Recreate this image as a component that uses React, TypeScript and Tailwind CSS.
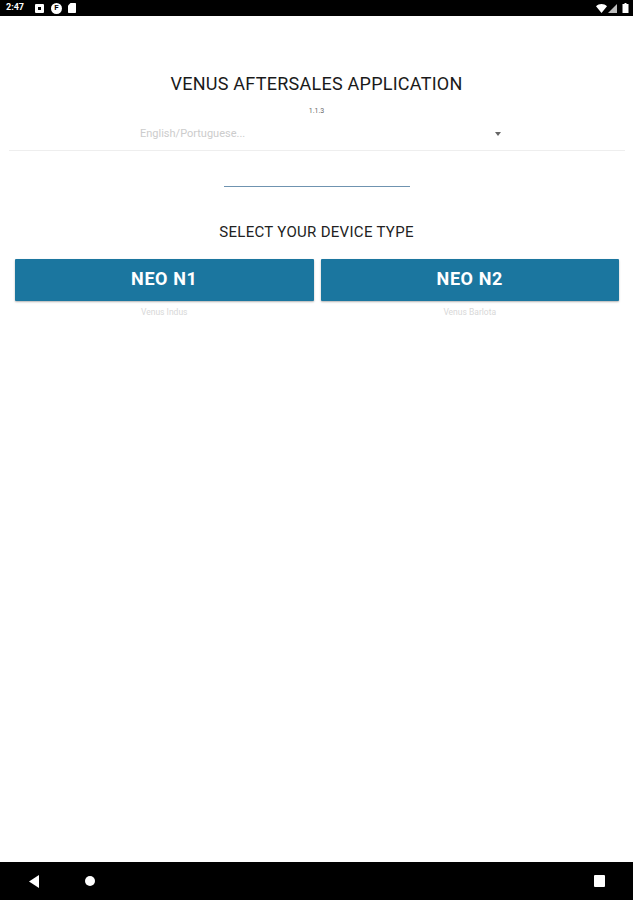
export default function App() {
  return (
    <div className="h-[900px] w-[633px] flex flex-col bg-white overflow-hidden font-['Roboto',sans-serif]">
      {/* Status bar */}
      <div className="h-4 bg-black flex items-center justify-between pl-[6px] pr-[4px] shrink-0">
        <div className="flex items-center">
          <span className="w-[20px] text-[9px] font-bold text-white">2:47</span>
          <div className="ml-[9px] w-[9px] h-[9px] bg-white rounded-[1px] flex items-center justify-center">
            <div className="w-[3px] h-[3px] bg-black"></div>
          </div>
          <div className="ml-[7px] w-[11px] h-[11px] bg-white rounded-full flex items-center justify-center">
            <span className="text-[8px] leading-none font-bold text-black">F</span>
          </div>
          <svg width="8" height="10" viewBox="0 0 8 10" className="ml-[6px]">
            <path d="M2.5 0H7C7.6 0 8 .4 8 1V9C8 9.6 7.6 10 7 10H1C.4 10 0 9.6 0 9V2.5Z" fill="#fff" />
          </svg>
        </div>
        <div className="flex items-center gap-[1px]">
          <svg width="11" height="9" viewBox="0 0 11 9">
            <path d="M0 2.2C3 -0.6 8 -0.6 11 2.2L5.5 9Z" fill="#fff" />
          </svg>
          <svg width="9" height="9" viewBox="0 0 9 9">
            <path d="M9 0V9H0Z" fill="#bdbdbd" />
          </svg>
          <svg width="7" height="10" viewBox="0 0 6 10" className="ml-[4px]">
            <path d="M2 0H4V1H6V10H0V1H2Z" fill="#fff" />
          </svg>
        </div>
      </div>

      {/* Content */}
      <div className="flex-1 flex flex-col items-center">
        <h1 className="mt-[58px] text-[18px] leading-5 tracking-[0.25px] text-[#1a1a1a]">VENUS AFTERSALES APPLICATION</h1>
        <p className="mt-[13px] text-[7px] leading-[9px] text-[#666]">1.1.3</p>

        <div className="mt-[8px] w-[616px] h-[27px] border-b border-[#eeeeee] flex justify-center">
          <div className="w-[369px] h-[20px] pl-[8px] flex items-center justify-between">
            <span className="text-[11px] text-[#cccccc]">English/Portuguese...</span>
            <svg width="6" height="4" viewBox="0 0 6 4">
              <path d="M0 0H6L3 4Z" fill="#666" />
            </svg>
          </div>
        </div>

        <div className="mt-[35px] w-[186px] h-[1px] bg-[#6f93b0]"></div>

        <h2 className="mt-[35px] text-[15px] leading-5 tracking-[0.3px] text-[#222]">SELECT YOUR DEVICE TYPE</h2>

        <div className="mt-[17px] w-full pl-[15px] pr-[14px] grid grid-cols-2 gap-[7px]">
          <div className="flex flex-col items-center">
            <button className="w-full h-[42px] pb-[3px] bg-[#1b769f] rounded-[1px] shadow-[0_1px_2px_rgba(0,0,0,0.3)] text-white text-[18px] font-bold tracking-[0.6px]">NEO N1</button>
            <span className="mt-[5px] text-[8.5px] leading-[12px] text-[#d8d8d8]">Venus Indus</span>
          </div>
          <div className="flex flex-col items-center">
            <button className="w-full h-[42px] pb-[3px] bg-[#1b769f] rounded-[1px] shadow-[0_1px_2px_rgba(0,0,0,0.3)] text-white text-[18px] font-bold tracking-[0.6px]">NEO N2</button>
            <span className="mt-[5px] text-[8.5px] leading-[12px] text-[#d8d8d8]">Venus Barlota</span>
          </div>
        </div>
      </div>

      {/* Nav bar */}
      <div className="h-[38px] bg-black shrink-0 flex items-center pl-[29px] pr-[28px]">
        <svg width="10" height="13" viewBox="0 0 10 13">
          <path d="M10 0V13L0 6.5Z" fill="#fff" />
        </svg>
        <div className="ml-[46px] w-[10px] h-[10px] rounded-full bg-white"></div>
        <div className="ml-auto w-[11px] h-[12px] rounded-[1px] bg-white"></div>
      </div>
    </div>
  );
}
